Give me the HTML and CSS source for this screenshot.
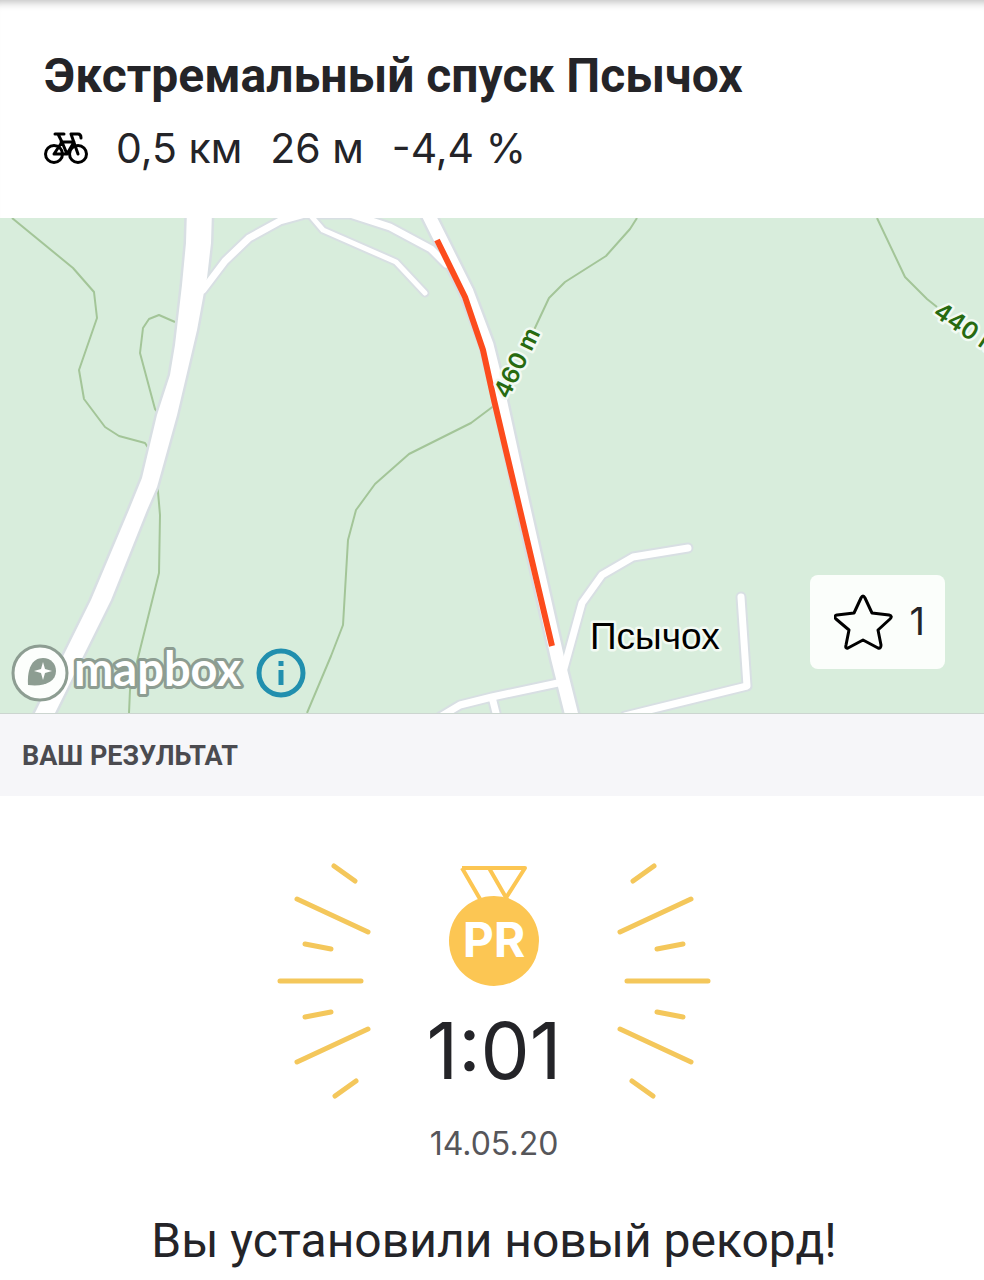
FILE: index.html
```html
<!DOCTYPE html>
<html lang="ru">

<head>
	<meta charset="UTF-8">
	<meta name="viewport" content="width=device-width, initial-scale=1.0">
	<title>Экстремальный спуск Псычох</title>
	<link rel="stylesheet" href="styles.css">
</head>

<body>
	<header class="segment-header">
		<h1>Экстремальный спуск Псычох</h1>
		<div class="stats">
			<svg class="bike" viewBox="0 0 44 34" aria-hidden="true">
				<circle cx="10" cy="23" r="8.500" />
				<circle cx="34" cy="23" r="8.500" />
				<path d="M10 23 L18 11 L23 23 Z M17 11 H30 L23 23 M14 3 L18 11 M11 3 H20 M34 23 L27 3 H34 Q37 3 37 7" />
			</svg>
			<span>0,5 км</span>
			<span>26 м</span>
			<span>-4,4 %</span>
		</div>
	</header>

	<section class="map">
		<svg class="map-canvas" viewBox="0 218 984 495" role="img" aria-label="Карта сегмента">
			<g class="contour">
				<path d="M12 218 L73 268 L94 292 L97 318 L79 370 L84 399 L105 427 L119 436 L145 443 L149 449" />
				<path d="M175 322 L159 315 L149 319 L143 328 L140 353 L155 409 L160 415" />
				<path d="M157 480 L160 515 L159 573 L130 690 L129 713" />
				<path d="M637 218 L630 229 L606 256 L565 282 L549 298 L534 330" />
				<path d="M495 405 L471 423 L409 454 L375 484 L356 510 L348 540 L343 625 L331 656 L307 713" />
				<path d="M877 218 L905 277 L927 299 L937 307" />
			</g>
			<g class="casing">
				<path class="highway" d="M187 210 L186 243 L182 285 L175 345 L170 375 L157 415 L142 478 L129 510 L91 600 L33 717 L53 717 L111 600 L147 510 L157 487 L177 415 L197 330 L204 292 L207 278 L211 243 L212 210 Z" />
				<path class="lane" d="M203 290 L225 261 L249 238 L280 221 L305 214 L350 214 L390 227 L431 249 L446 264" />
				<path class="path" d="M311 216 L323 230 L396 262 L425 293" />
				<path class="street" d="M426 210 L441 240 L467 292 L487 345 L497 385 L522 500 L558 660 L573 720" />
				<path class="lane" d="M563 672 L582 603 L602 575 L633 557 L688 548" />
				<path class="lane" d="M741 597 L747 686 L625 716" />
				<path class="lane" d="M558 683 L492 697 L460 705 L440 717 M492 697 L497 717" />
			</g>
			<g class="road">
				<path class="highway" d="M187 210 L186 243 L182 285 L175 345 L170 375 L157 415 L142 478 L129 510 L91 600 L33 717 L53 717 L111 600 L147 510 L157 487 L177 415 L197 330 L204 292 L207 278 L211 243 L212 210 Z" />
				<path class="lane" d="M203 290 L225 261 L249 238 L280 221 L305 214 L350 214 L390 227 L431 249 L446 264" />
				<path class="path" d="M311 216 L323 230 L396 262 L425 293" />
				<path class="street" d="M426 210 L441 240 L467 292 L487 345 L497 385 L522 500 L558 660 L573 720" />
				<path class="lane" d="M563 672 L582 603 L602 575 L633 557 L688 548" />
				<path class="lane" d="M741 597 L747 686 L625 716" />
				<path class="lane" d="M558 683 L492 697 L460 705 L440 717 M492 697 L497 717" />
			</g>
			<path class="track" d="M437 240 L465 297 L483 350 L494 400 L520 510 L552 646" />
			<text class="height-label" transform="translate(508 400) rotate(-64)">460 m</text>
			<text class="height-label" transform="translate(932 315) rotate(34)">440 m</text>
			<text class="place-label" x="590" y="649">Псычох</text>
		</svg>

		<div class="attribution">
			<a class="mapbox" href="#" aria-label="mapbox">
				<svg viewBox="0 0 240 60">
					<circle class="logo-ring" cx="30" cy="30" r="27" />
					<path class="logo-pin" d="M18 42 C17 26 22 15 33 15 C41 15 46 21 46 28 C46 39 34 44 18 42 Z" />
					<path class="logo-star" d="M33 19 L35 26 L42 28 L35 30 L33 37 L31 30 L24 28 L31 26 Z" />
					<text class="logo-text" x="64" y="43">mapbox</text>
				</svg>
			</a>
			<button class="info" type="button" aria-label="Информация о карте">
				<svg viewBox="0 0 50 50">
					<circle cx="25" cy="25" r="22" />
					<path d="M25 13 V18 M25 22 V37" />
				</svg>
			</button>
		</div>

		<button class="favorite" type="button" aria-label="В избранное: 1">
			<svg viewBox="0 0 60 58" aria-hidden="true">
				<path d="M27 6 Q29 2 31 6 L38 21 L55 23 Q59 24 56 27 L44 38 L47 53 Q47 57 44 56 L29 48 L14 56 Q11 57 12 53 L15 38 L2 27 Q-1 24 3 23 L20 21 Z" />
			</svg>
			<span>1</span>
		</button>
	</section>

	<h2 class="section-title">ВАШ РЕЗУЛЬТАТ</h2>

	<main class="result">
		<div class="record">
			<svg class="rays" viewBox="0 0 96 240" aria-hidden="true">
				<path d="M58 5 L79 20 M21 38 L92 71 M29 83 L55 88 M4 120 H85 M29 156 L55 151 M21 201 L92 168 M59 235 L80 220" />
			</svg>
			<div class="effort">
				<svg class="medal" viewBox="0 0 92 122" role="img" aria-label="PR">
					<path d="M14 3 H77 L56 36 M14 3 L32 34 M41 3 L60 36" />
					<circle cx="46" cy="76" r="45" />
					<text x="46" y="92">PR</text>
				</svg>
				<strong class="time">1:01</strong>
			</div>
			<svg class="rays rays-right" viewBox="0 0 96 240" aria-hidden="true">
				<path d="M58 5 L79 20 M21 38 L92 71 M29 83 L55 88 M4 120 H85 M29 156 L55 151 M21 201 L92 168 M59 235 L80 220" />
			</svg>
		</div>
		<time class="date" datetime="2020-05-14">14.05.20</time>
		<p class="message">Вы установили новый рекорд!</p>
	</main>
</body>

</html>
```
FILE: styles.css
```css
* {
	box-sizing: border-box;
}

body {
	margin: 0;
	background-color: #fff;
	font-family: Roboto, sans-serif;
	color: #242428;
}

h1,
h2,
p {
	margin: 0;
}

button {
	border: 0;
	padding: 0;
	background: none;
	font: inherit;
	color: inherit;
	cursor: pointer;
}

svg {
	display: block;
}

.segment-header {
	padding: 44px 44px 42px;
	box-shadow: inset 0 10px 8px -8px #bbb;
}

h1 {
	font-size: 48px;
	line-height: 64px;
	font-weight: 700;
}

.stats {
	display: flex;
	align-items: center;
	gap: 28px;
	margin-top: 12px;
	font-family: Inter, sans-serif;
	font-size: 41px;
	line-height: 56px;
}

.bike {
	width: 44px;
	height: 34px;
	fill: none;
	stroke: #000;
	stroke-width: 3;
	stroke-linecap: round;
	stroke-linejoin: round;
}

.map {
	position: relative;
	border-bottom: 1px solid #ccd5d0;
	background-color: #d8eddc;
}

.map-canvas {
	width: 100%;
	height: auto;
}

.contour,
.casing,
.road,
.track {
	fill: none;
	stroke-linejoin: round;
}

.contour {
	stroke: #a3c598;
	stroke-width: 2;
}

.casing {
	stroke: #d8dfe3;
	stroke-linecap: round;
}

.casing .highway {
	stroke-width: 5;
}

.casing .street {
	stroke-width: 18;
}

.casing .lane {
	stroke-width: 11;
}

.casing .path {
	stroke-width: 9;
}

.road {
	stroke: #fff;
	stroke-linecap: round;
}

.road .highway {
	fill: #fff;
	stroke: none;
}

.road .street {
	stroke-width: 13;
}

.road .lane {
	stroke-width: 7;
}

.road .path {
	stroke-width: 5;
}

.track {
	stroke: #fc4c1d;
	stroke-width: 6;
}

.height-label,
.place-label {
	paint-order: stroke;
	stroke: #f2faf3;
	stroke-width: 5;
	stroke-linejoin: round;
}

.height-label {
	fill: #276a10;
	font: 500 25px "Liberation Sans", sans-serif;
	font: 600 24px Inter, sans-serif;
}

.place-label {
	fill: #000;
	font: 37px "Liberation Sans", sans-serif;
}

.attribution {
	position: absolute;
	left: 10px;
	bottom: 10px;
	display: flex;
	align-items: center;
	gap: 6px;
}

.mapbox svg {
	width: 240px;
	height: 60px;
	overflow: visible;
}

.logo-ring {
	fill: #fcfefc;
	stroke: #8d9d92;
	stroke-width: 3;
}

.logo-pin {
	fill: #8d9d92;
}

.logo-star {
	fill: #fff;
}

.logo-text {
	fill: #fff;
	stroke: #8d9d92;
	stroke-width: 6;
	stroke-linejoin: round;
	paint-order: stroke;
	font: 700 47px Lato, sans-serif;
}

.info svg {
	width: 50px;
	height: 50px;
	fill: none;
	stroke: #218fae;
	stroke-width: 5;
}

.favorite {
	position: absolute;
	right: 39px;
	bottom: 44px;
	display: flex;
	align-items: center;
	gap: 16px;
	padding: 17px 20px 19px 24px;
	border-radius: 8px;
	background-color: #fbfefb;
	font-family: Inter, sans-serif;
	font-size: 38px;
	line-height: 54px;
}

.favorite svg {
	width: 60px;
	height: 58px;
	fill: none;
	stroke: #000;
	stroke-width: 3;
	stroke-linejoin: round;
}

.section-title {
	padding: 25px 22px 23px;
	background-color: #f6f6f9;
	font-size: 27px;
	line-height: 34px;
	font-weight: 700;
	color: #4b4b50;
}

.result {
	display: flex;
	flex-direction: column;
	align-items: center;
	padding: 65px 20px 0 24px;
	text-align: center;
}

.record {
	display: flex;
	justify-content: center;
	gap: 54px;
}

.rays {
	width: 96px;
	height: 240px;
	fill: none;
	stroke: #f4c75b;
	stroke-width: 5;
	stroke-linecap: round;
}

.rays-right {
	transform: scaleX(-1);
}

.effort {
	display: flex;
	flex-direction: column;
	align-items: center;
	padding-top: 4px;
}

.medal {
	width: 92px;
	height: 122px;
	fill: none;
	stroke: #fcc653;
	stroke-width: 4;
	stroke-linejoin: round;
}

.medal circle {
	fill: #fcc653;
	stroke: none;
}

.medal text {
	fill: #fff;
	stroke: none;
	font: 700 48px Inter, sans-serif;
	text-anchor: middle;
}

.time {
	margin-top: 19px;
	font-family: Inter, sans-serif;
	font-size: 78px;
	line-height: 90px;
	font-weight: 400;
}

.date {
	margin-top: 20px;
	font-family: Inter, sans-serif;
	font-size: 32px;
	line-height: 46px;
	color: #56565a;
}

.message {
	margin-top: 43px;
	font-size: 48px;
	line-height: 62px;
}
```
